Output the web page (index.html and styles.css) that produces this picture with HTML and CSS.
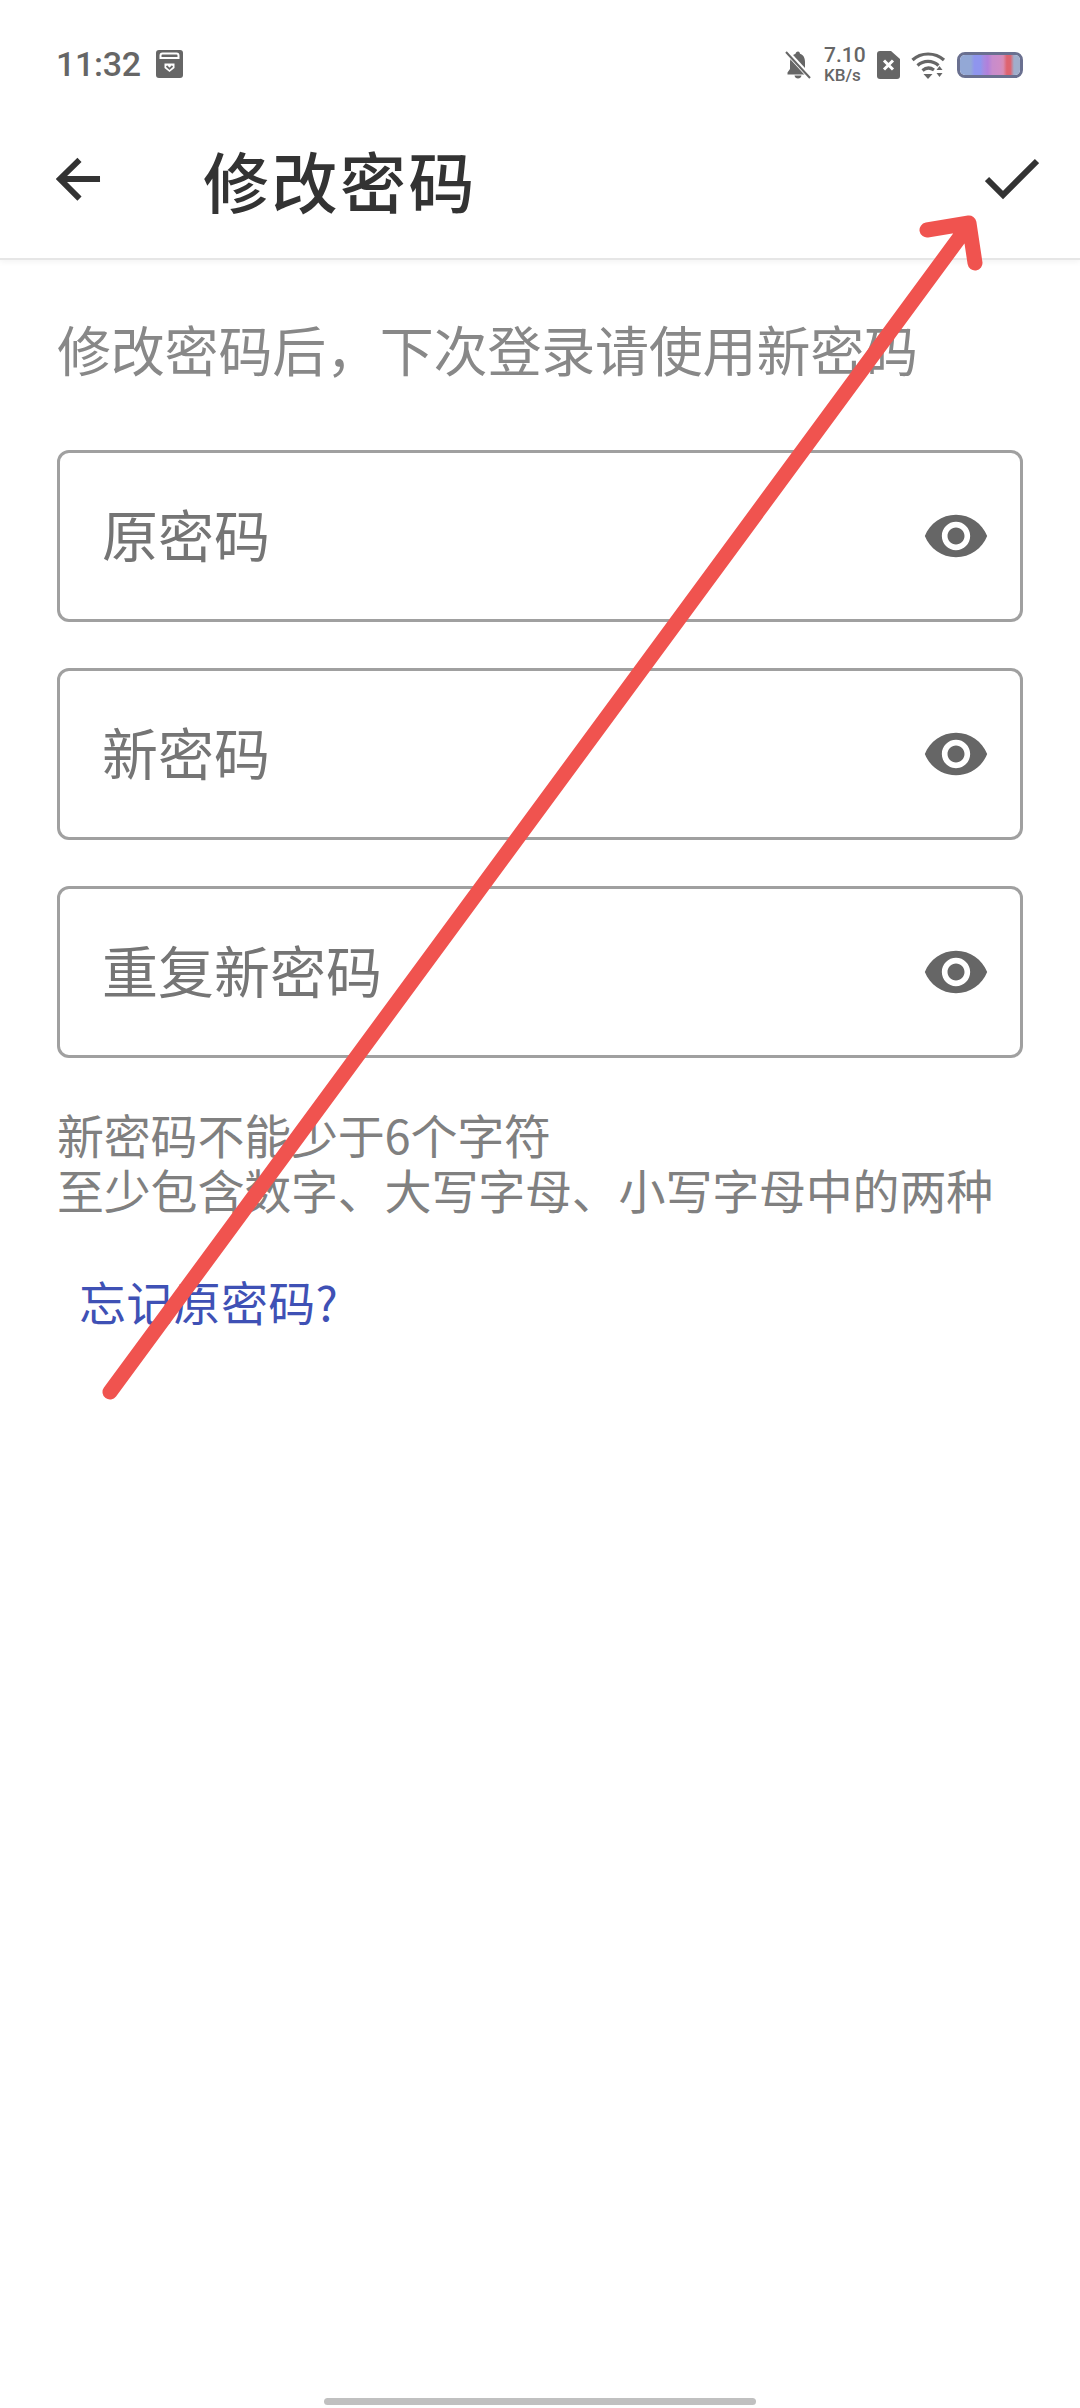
FILE: index.html
```html
<!DOCTYPE html>
<html lang="zh-CN">
<head>
<meta charset="utf-8">
<title>修改密码</title>
<link rel="stylesheet" href="styles.css">
</head>
<body>
<div class="screen">
  <header class="top">
    <div class="status">
      <div class="status-left">
        <span class="time">11:32</span>
        <svg class="box-icon" viewBox="0 0 27 28"><rect width="27" height="28" rx="3" fill="#666"/><path d="M4.500 9V5.500a2 2 0 0 1 2-2h14a2 2 0 0 1 2 2V9" fill="none" stroke="#fff" stroke-width="2"/><path d="M4 8h19" stroke="#fff" stroke-width="2"/><path d="M8.500 13.500h10v4.500l-5 4-5-4z" fill="#fff"/><path d="M10.500 16l3 2.800 3-2.800" fill="none" stroke="#666" stroke-width="1.800"/></svg>
      </div>
      <div class="status-right">
        <svg class="bell" viewBox="0 0 26 30"><path d="M13 1.500c-1.500 0-2.300 1-2.500 2.300C6.800 5 5 8 5 12v7l-2.500 3.500v2h20v-2L20 19v-7c0-4-1.500-7-5-8.200C14.800 2.500 14.500 1.500 13 1.500zM9.500 25.500c.3 1.800 1.700 3 3.500 3s3.200-1.200 3.500-3z" fill="#666"/><path d="M1 1l24 26" stroke="#fff" stroke-width="5"/><path d="M1 2l24 26" stroke="#666" stroke-width="2"/></svg>
        <div class="speed"><span class="speed-num">7.10</span><span class="speed-unit">KB/s</span></div>
        <svg class="sim" viewBox="0 0 23 28"><path d="M3 0h11l9 8v17a3 3 0 0 1-3 3H3a3 3 0 0 1-3-3V3a3 3 0 0 1 3-3z" fill="#666"/><path d="M7 9.500l9 9M16 9.500l-9 9" stroke="#fff" stroke-width="3"/></svg>
        <svg class="wifi" viewBox="0 0 35 28"><path d="M1.500 9C10 1 24 1 33 9M6.500 14.500c6-5.500 15-5.500 21 0M11.500 19.500c3.500-3 8-3 11.500-.5" fill="none" stroke="#666" stroke-width="3.200"/><path d="M12.500 23h9l-4.500 5z" fill="#666"/><path d="M28.500 15l3 4h-6zM25.500 22h6l-3 4z" fill="#666"/></svg>
        <div class="battery"><div class="battery-fill"></div></div>
      </div>
    </div>
    <div class="appbar">
      <svg class="back" viewBox="0 0 46 46"><path d="M45 23H5M24 3.500L4 23l20 20" fill="none" stroke="#333" stroke-width="6"/></svg>
      <h1 class="title">修改密码</h1>
      <svg class="check" viewBox="0 0 54 42"><path d="M2 21l16 16L52 3" fill="none" stroke="#333" stroke-width="6"/></svg>
    </div>
  </header>
  <main class="content">
    <p class="intro">修改密码后，下次登录请使用新密码</p>
    <div class="fields">
      <div class="field"><span class="placeholder">原密码</span><svg class="eye" viewBox="0 0 24 24"><path d="M12 4.500C7 4.500 2.730 7.610 1 12c1.730 4.390 6 7.500 11 7.500s9.270-3.110 11-7.500c-1.730-4.390-6-7.500-11-7.500zM12 17c-2.760 0-5-2.240-5-5s2.240-5 5-5 5 2.240 5 5-2.240 5-5 5zm0-8c-1.660 0-3 1.340-3 3s1.340 3 3 3 3-1.340 3-3-1.340-3-3-3z"/></svg></div>
      <div class="field"><span class="placeholder">新密码</span><svg class="eye" viewBox="0 0 24 24"><path d="M12 4.500C7 4.500 2.730 7.610 1 12c1.730 4.390 6 7.500 11 7.500s9.270-3.110 11-7.500c-1.730-4.390-6-7.500-11-7.500zM12 17c-2.760 0-5-2.240-5-5s2.240-5 5-5 5 2.240 5 5-2.240 5-5 5zm0-8c-1.660 0-3 1.340-3 3s1.340 3 3 3 3-1.340 3-3-1.340-3-3-3z"/></svg></div>
      <div class="field"><span class="placeholder">重复新密码</span><svg class="eye" viewBox="0 0 24 24"><path d="M12 4.500C7 4.500 2.730 7.610 1 12c1.730 4.390 6 7.500 11 7.500s9.270-3.110 11-7.500c-1.730-4.390-6-7.500-11-7.500zM12 17c-2.760 0-5-2.240-5-5s2.240-5 5-5 5 2.240 5 5-2.240 5-5 5zm0-8c-1.660 0-3 1.340-3 3s1.340 3 3 3 3-1.340 3-3-1.340-3-3-3z"/></svg></div>
    </div>
    <p class="hint">新密码不能少于6个字符<br>至少包含数字、大写字母、小写字母中的两种</p>
    <a class="forgot">忘记原密码?</a>
  </main>
  <div class="home-bar"></div>
  <svg class="annotation" viewBox="0 0 1080 2408"><path d="M110 1392L968 226M927 230l42-7 6 40" fill="none" stroke="#f0534f" stroke-width="15" stroke-linecap="round" stroke-linejoin="round"/></svg>
</div>
</body>
</html>
```
FILE: styles.css
```css
* { box-sizing: border-box; }
html, body { margin: 0; padding: 0; background: #fff; }
.screen {
  position: relative;
  width: 1080px;
  height: 2408px;
  display: flex;
  flex-direction: column;
  font-family: "Noto Sans CJK SC", "Noto Sans", sans-serif;
  overflow: hidden;
}
.top {
  height: 260px;
  border-bottom: 2px solid #e6e6e6;
  box-shadow: 0 2px 6px rgba(0, 0, 0, 0.05);
}
.status {
  height: 90px;
  padding: 45px 57px 0 56px;
  display: flex;
  justify-content: space-between;
  align-items: flex-start;
}
.status-left { display: flex; align-items: center; gap: 15px; margin-top: 5px; }
.time { font: 500 34px/28px Roboto, sans-serif; color: #666; letter-spacing: -0.3px; }
.box-icon { width: 27px; height: 28px; }
.status-right { display: flex; align-items: center; }
.bell { width: 26px; height: 30px; margin-right: 13px; }
.speed { display: flex; flex-direction: column; width: 40px; margin-right: 13px; font-family: Roboto, sans-serif; font-weight: 500; color: #666; }
.speed-num { font-size: 21px; line-height: 21px; white-space: nowrap; }
.speed-unit { font-size: 17px; line-height: 18px; white-space: nowrap; }
.sim { width: 23px; height: 28px; margin-right: 11px; }
.wifi { width: 35px; height: 28px; margin-right: 11px; }
.battery {
  width: 66px;
  height: 26px;
  border: 3px solid #6a7090;
  border-radius: 8px;
  overflow: hidden;
}
.battery-fill {
  height: 100%;
  background: linear-gradient(90deg, #93a8d6 0%, #93a8d6 18%, #8f95ee 24%, #8f95ee 34%, #a88adf 40%, #b080dc 46%, #c78ccc 54%, #cf8cc6 66%, #d88cb4 72%, #de6470 78%, #de6470 84%, #a0aecc 90%, #a0aecc 100%);
}
.appbar {
  height: 168px;
  display: flex;
  align-items: center;
  padding: 10px 0 0 56px;
}
.back { width: 45px; height: 46px; }
.title {
  margin: 0 0 0 102px;
  font-size: 66px;
  font-weight: 500;
  line-height: 80px;
  color: #333;
  letter-spacing: 2.5px;
}
.check { width: 54px; height: 42px; margin-left: auto; margin-right: 41px; }
.content { padding: 0 57px; flex: 1; }
.intro {
  margin: 56px 0 0;
  font-size: 54px;
  line-height: 66px;
  color: #888;
  white-space: nowrap;
  letter-spacing: -0.2px;
}
.fields { display: flex; flex-direction: column; gap: 46px; margin-top: 68px; }
.field {
  height: 172px;
  border: 3px solid #a0a0a0;
  border-radius: 12px;
  display: flex;
  align-items: center;
  justify-content: space-between;
  padding: 0 30px 0 42px;
}
.placeholder { font-size: 56px; line-height: 70px; color: #757575; margin-bottom: 6px; }
.eye { width: 68px; height: 68px; fill: #666; }
.hint {
  margin: 48px 0 0;
  font-size: 47px;
  line-height: 55px;
  color: #808080;
  white-space: nowrap;
  letter-spacing: -0.2px;
}
.forgot {
  display: block;
  margin: 55px 0 0 22px;
  font-size: 47px;
  line-height: 60px;
  color: #3f51b5;
  letter-spacing: 0.3px;
}
.home-bar {
  position: absolute;
  left: 324px;
  bottom: 3px;
  width: 432px;
  height: 7px;
  border-radius: 4px;
  background: #c0c0c0;
}
.annotation {
  position: absolute;
  left: 0;
  top: 0;
  width: 1080px;
  height: 2408px;
  pointer-events: none;
}
```
